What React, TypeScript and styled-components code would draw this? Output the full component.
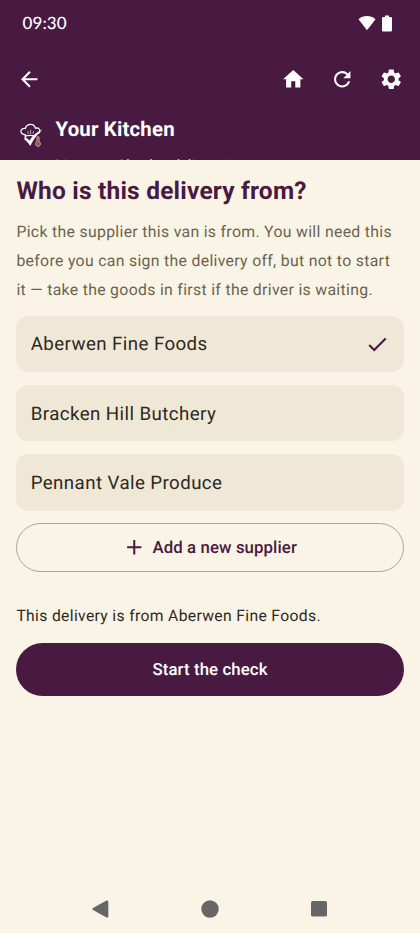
import React from "react";
import styled, { createGlobalStyle } from "styled-components";
import { MdArrowBack, MdHome, MdRefresh, MdSettings, MdCheck, MdAdd } from "react-icons/md";

const GlobalStyle = createGlobalStyle`
  html, body { margin: 0; padding: 0; background: #faf4e6; text-rendering: geometricPrecision; }
  *, *::before, *::after { box-sizing: border-box; }
  button { font: inherit; text-rendering: inherit; border: 0; padding: 0; margin: 0; background: none; color: inherit; }
`;

const Screen = styled.div`
  display: flex;
  flex-direction: column;
  width: 100%;
  height: 933px;
  overflow: hidden;
  background: #faf4e6;
  font-family: Roboto, sans-serif;
  color: #2d291f;
`;

const Header = styled.header`
  flex: none;
  height: 160px;
  overflow: hidden;
  background: #491a41;
  color: #fff;
`;

const StatusBar = styled.div`
  display: flex;
  align-items: center;
  justify-content: space-between;
  height: 46px;
  padding: 0 28.5px 0 22.5px;
`;

const Clock = styled.span`
  font: 500 17px/20px Lato, sans-serif;
  letter-spacing: 0.1px;
`;

const StatusIcons = styled.div`
  display: flex;
  align-items: center;
  gap: 6px;
`;

const Toolbar = styled.nav`
  display: flex;
  align-items: center;
  height: 66px;
  padding: 0 16.5px 0 16.5px;
  gap: 24.5px;
`;

const IconButton = styled.button<{ $push?: boolean }>`
  display: flex;
  margin-right: ${(p) => (p.$push ? "auto" : "0")};
  svg { width: 24.5px; height: 24.5px; }
`;

const Brand = styled.div`
  display: flex;
  padding: 4px 16px 0 18.5px;
  gap: 12px;
`;

const LogoBox = styled.div`
  width: 25px;
  height: 26px;
  margin-top: 6px;
`;

const BrandName = styled.div`
  font-size: 20.4px;
  line-height: 26px;
  font-weight: 700;
  letter-spacing: 0.17px;
`;

const BrandNote = styled.div`
  margin-top: 14px;
  font-size: 14.3px;
  line-height: 20px;
  letter-spacing: 0.08px;
  white-space: pre;
`;

const Content = styled.main`
  flex: 1;
  display: flex;
  flex-direction: column;
  padding: 13.5px 16.4px 0;
`;

const Title = styled.h1`
  margin: 0;
  font-size: 24.5px;
  line-height: 34px;
  font-weight: 700;
  letter-spacing: 0.2px;
  color: #491a41;
`;

const Intro = styled.p`
  margin: 9px 0 12px;
  font-size: 15.8px;
  line-height: 29px;
  letter-spacing: 0.32px;
  color: #69634f;
  white-space: pre;
`;

const SupplierList = styled.div`
  display: grid;
  gap: 12.4px;
`;

const Supplier = styled.button`
  display: flex;
  align-items: center;
  justify-content: space-between;
  height: 56.8px;
  padding: 1px 14.3px 0;
  border-radius: 12.3px;
  background: #efe8d6;
  font-size: 18.7px;
  letter-spacing: 0.42px;
  svg { width: 24.5px; height: 24.5px; color: #491a41; }
`;

const AddButton = styled.button`
  display: flex;
  align-items: center;
  justify-content: center;
  gap: 6px;
  height: 49px;
  margin-top: 12.5px;
  border: 1px solid #aaa58c;
  border-radius: 25px;
  color: #491a41;
  font-size: 16.8px;
  font-weight: 500;
  letter-spacing: 0.1px;
  svg { width: 24.5px; height: 24.5px; margin-left: -1px; }
`;

const Summary = styled.p`
  margin: 31.5px 0 14.5px;
  font-size: 15.7px;
  line-height: 24.6px;
  letter-spacing: 0.34px;
`;

const StartButton = styled.button`
  height: 53px;
  padding-top: 1px;
  border-radius: 27px;
  background: #491a41;
  color: #fff;
  font-size: 16.8px;
  font-weight: 500;
  letter-spacing: 0.1px;
`;

const SystemNav = styled.footer`
  flex: none;
  display: flex;
  align-items: center;
  justify-content: space-between;
  height: 49px;
  padding: 0 93px 0 92px;
  color: #666;
  svg { display: block; }
`;

function Logo() {
  return (
    <svg width="28" height="26" viewBox="0 0 28 26" fill="none">
      <path d="M6.2 15.4V11.6C0 11.4 1 4.6 6.3 5.4C8-.2 15.1.1 16.4 5.2C21 4.1 22.4 9 18.6 10.7M6.2 13.2C9 12.3 12.8 12.3 15.4 13" stroke="#fff" strokeWidth="1.3" strokeLinecap="round" transform="translate(0 1)" />
      <path d="M8.8 9l.4 3M11.6 7.7V12M14.5 9l-.4 3" stroke="#d9c9d6" strokeWidth=".8" />
      <path d="M5 17.300l2.300-1.600c1.100.8 2.200 1.800 3 3C13.800 13.500 18 10.100 23.500 7.300C19.500 11.300 15 16.300 11.300 24C9.600 21.200 7.600 19 5 17.300z" fill="#fff" />
      <path d="M17.900 19.600V15.200q1.100-1.600 2.200 0V19.600a2.500 2.500 0 1 1-2.200 0z" fill="#8e5858" stroke="#d6a592" strokeWidth=".9" />
    </svg>
  );
}

function WifiIcon() {
  return (
    <svg width="18" height="16" viewBox="0 0 18 16" fill="currentColor">
      <path d="M9 15.300L.5 4.300C5.200-.1 12.800-.1 17.500 4.300z" />
    </svg>
  );
}

function BatteryIcon() {
  return (
    <svg width="10" height="17" viewBox="0 0 10 17" fill="currentColor">
      <path d="M3 .5h4V2h1.700Q10 2 10 3.200V15.200Q10 16.500 8.700 16.500H1.300Q0 16.500 0 15.200V3.200Q0 2 1.300 2H3z" />
    </svg>
  );
}

const suppliers = ["Aberwen Fine Foods", "Bracken Hill Butchery", "Pennant Vale Produce"];

export default function App() {
  const selected = suppliers[0];
  return (
    <>
      <GlobalStyle />
      <Screen>
        <Header>
          <StatusBar>
            <Clock>09:30</Clock>
            <StatusIcons><WifiIcon /><BatteryIcon /></StatusIcons>
          </StatusBar>
          <Toolbar>
            <IconButton $push aria-label="Back"><MdArrowBack /></IconButton>
            <IconButton aria-label="Home"><MdHome /></IconButton>
            <IconButton aria-label="Refresh"><MdRefresh /></IconButton>
            <IconButton aria-label="Settings"><MdSettings /></IconButton>
          </Toolbar>
          <Brand>
            <LogoBox><Logo /></LogoBox>
            <div>
              <BrandName>Your Kitchen</BrandName>
              <BrandNote>Live run · Check a delivery in</BrandNote>
            </div>
          </Brand>
        </Header>
        <Content>
          <Title>Who is this delivery from?</Title>
          <Intro>{"Pick the supplier this van is from. You will need this\nbefore you can sign the delivery off, but not to start\nit — take the goods in first if the driver is waiting."}</Intro>
          <SupplierList>
            {suppliers.map((name) => (
              <Supplier key={name}>
                {name}
                {name === selected && <MdCheck />}
              </Supplier>
            ))}
          </SupplierList>
          <AddButton><MdAdd />Add a new supplier</AddButton>
          <Summary>This delivery is from {selected}.</Summary>
          <StartButton>Start the check</StartButton>
        </Content>
        <SystemNav>
          <svg width="17" height="18" viewBox="0 0 17 18" fill="currentColor"><path d="M1 8L14.500.5Q16.300 0 16.300 1.800V16.200Q16.300 18 14.500 17.400L1 10Q-.3 9 1 8z" /></svg>
          <svg width="18" height="18" viewBox="0 0 18 18" fill="currentColor"><circle cx="9" cy="9" r="8.700" /></svg>
          <svg width="16" height="16" viewBox="0 0 16 16" fill="currentColor"><rect width="16" height="15.600" rx="1.500" /></svg>
        </SystemNav>
      </Screen>
    </>
  );
}
